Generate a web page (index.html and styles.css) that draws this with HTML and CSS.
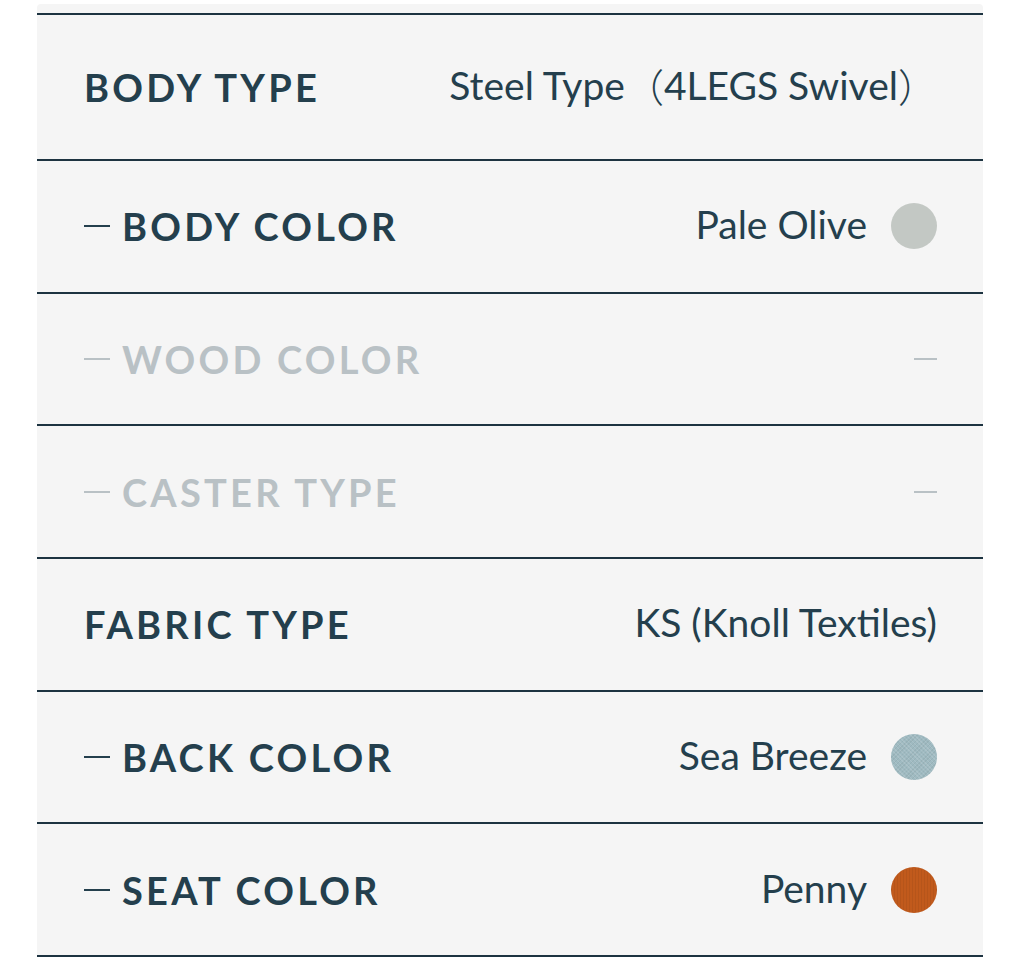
FILE: index.html
```html
<!DOCTYPE html>
<html lang="en">
<head>
  <meta charset="UTF-8">
  <meta name="viewport" content="width=device-width, initial-scale=1.0">
  <title>Specifications</title>
  <link rel="stylesheet" href="styles.css">
</head>
<body>

  <!-- Especificações do produto -->
  <div class="specs">
    <div class="spec-row spec-row--main">
      <span class="spec-label">Body Type</span>
      <span class="spec-value">Steel Type<span class="cjk">（</span>4LEGS Swivel<span class="cjk">）</span></span>
    </div>

    <div class="spec-row">
      <span class="spec-label sub">Body Color</span>
      <span class="spec-value">Pale Olive <i class="swatch pale-olive"></i></span>
    </div>

    <div class="spec-row disabled">
      <span class="spec-label sub">Wood Color</span>
      <span class="spec-value"><i class="empty"></i></span>
    </div>

    <div class="spec-row disabled">
      <span class="spec-label sub">Caster Type</span>
      <span class="spec-value"><i class="empty"></i></span>
    </div>

    <div class="spec-row">
      <span class="spec-label">Fabric Type</span>
      <span class="spec-value">KS (Knoll Textiles)</span>
    </div>

    <div class="spec-row">
      <span class="spec-label sub">Back Color</span>
      <span class="spec-value">Sea Breeze <i class="swatch sea-breeze"></i></span>
    </div>

    <div class="spec-row">
      <span class="spec-label sub">Seat Color</span>
      <span class="spec-value">Penny <i class="swatch penny"></i></span>
    </div>
  </div>

</body>
</html>
```

FILE: styles.css
```css
/* Estilos gerais */
body {
  margin: 0;
  padding: 0;
  background: #fff;
  font-family: Lato, "Noto Sans CJK JP", sans-serif;
  color: #243f4d;
}

.specs {
  margin: 4px 41px 0 37px;
  padding-top: 9px;
  background: #f5f5f5;
  border-radius: 4px 4px 0 0;
}

/* Linhas da tabela */
.spec-row {
  display: flex;
  align-items: center;
  justify-content: space-between;
  height: 132.7px;
  box-sizing: border-box;
  padding: 0 46px 0 47px;
  border-top: 2px solid #1d3341;
}

.spec-row:last-child {
  border-bottom: 2px solid #1d3341;
  height: 134.7px;
}

.spec-row--main {
  height: 146px;
}

.spec-label {
  display: flex;
  align-items: center;
  font-size: 38px;
  line-height: 1;
  font-weight: 700;
  letter-spacing: 0.085em;
  text-transform: uppercase;
}

/* Traço antes dos subitens */
.spec-label.sub::before {
  content: "";
  width: 26px;
  height: 2px;
  margin-right: 12px;
  background: currentColor;
}

.spec-value {
  display: flex;
  align-items: center;
  font-size: 39px;
  line-height: 1;
  font-weight: 400;
  margin-top: -3px;
}

.cjk {
  font-family: "Noto Sans CJK JP", sans-serif;
  font-weight: 300;
  line-height: 1;
}

.swatch {
  display: inline-block;
  width: 46px;
  height: 46px;
  margin-left: 24px;
  margin-top: 3px;
  border-radius: 50%;
}

.pale-olive {
  background: #c3c8c4;
}

.sea-breeze {
  background-color: #9fbac1;
  background-image: repeating-linear-gradient(45deg, rgba(255,255,255,0.12) 0 1px, transparent 1px 3px),
    repeating-linear-gradient(-45deg, rgba(0,0,0,0.05) 0 1px, transparent 1px 3px);
}

.penny {
  background-color: #c15a1c;
  background-image: repeating-linear-gradient(90deg, rgba(0,0,0,0.06) 0 1px, transparent 1px 3px);
}

/* Linhas desabilitadas */
.disabled {
  color: #b9c1c5;
}

.empty {
  display: inline-block;
  width: 23px;
  height: 2px;
  margin-top: 3px;
  background: currentColor;
}
```
